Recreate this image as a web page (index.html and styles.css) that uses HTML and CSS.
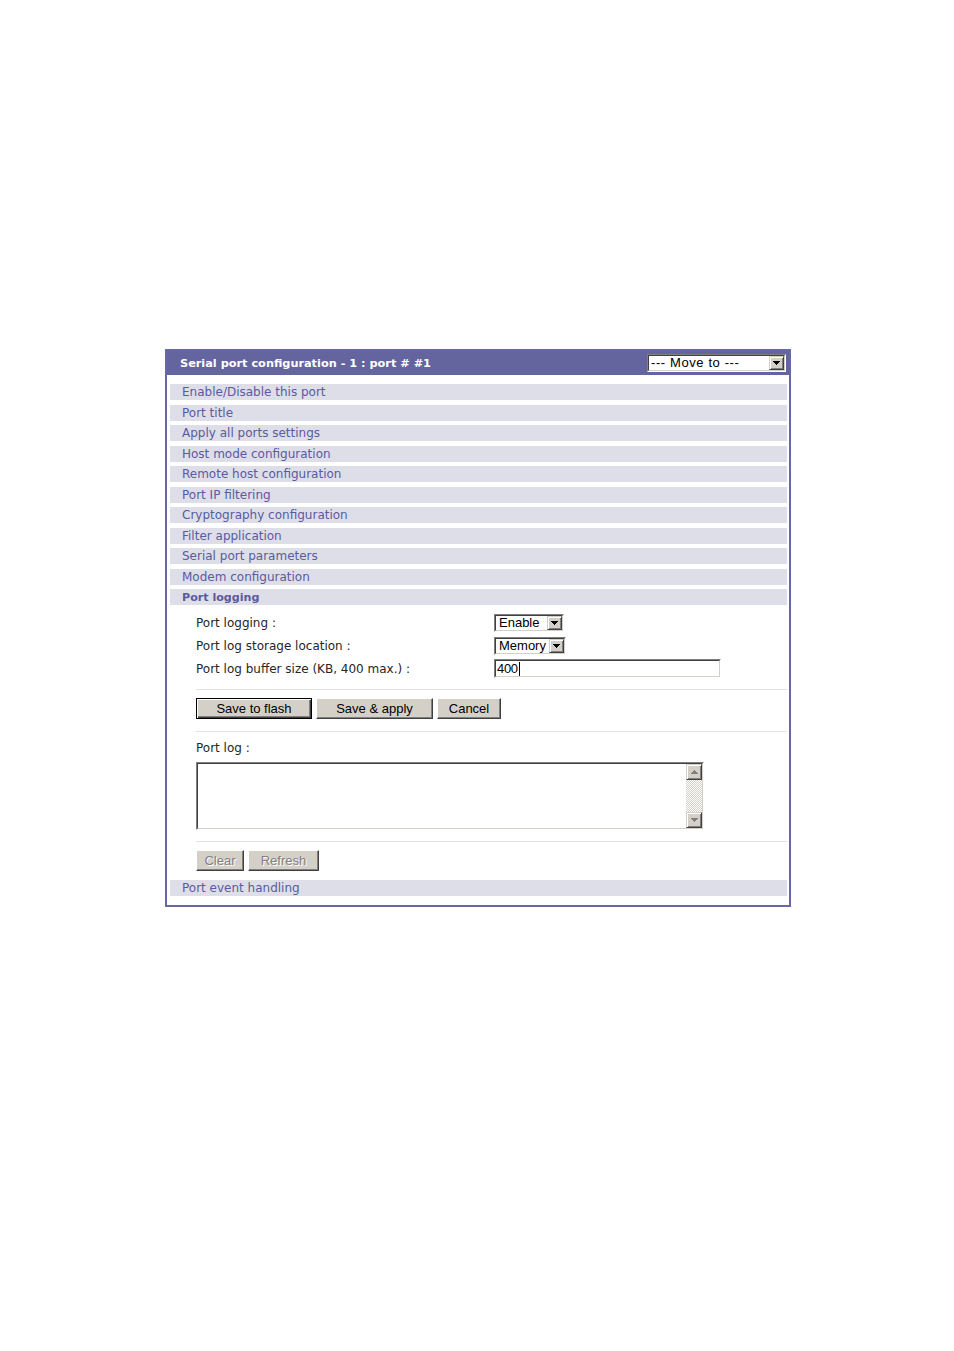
FILE: index.html
```html
<!DOCTYPE html>
<html>
<head>
<meta charset="utf-8">
<title>Serial port configuration</title>
<link rel="stylesheet" href="styles.css">
</head>
<body>
<div class="panel">
  <div class="panel-head">
    <span class="panel-title">Serial port configuration - 1 : port # #1</span>
    <div class="select select-move">
      <div class="select-inner">
        <span class="select-text move-text">--- Move to ---</span>
        <span class="select-btn"><svg width="7" height="4" viewBox="0 0 7 4" shape-rendering="crispEdges"><path d="M0 0h7v1h-1v1h-1v1h-1v1h-1v-1h-1v-1h-1v-1h-1z" fill="#000"/></svg></span>
      </div>
    </div>
  </div>
  <div class="panel-body">
    <div class="nav-row">Enable/Disable this port</div>
    <div class="nav-row">Port title</div>
    <div class="nav-row">Apply all ports settings</div>
    <div class="nav-row">Host mode configuration</div>
    <div class="nav-row">Remote host configuration</div>
    <div class="nav-row">Port IP filtering</div>
    <div class="nav-row">Cryptography configuration</div>
    <div class="nav-row">Filter application</div>
    <div class="nav-row">Serial port parameters</div>
    <div class="nav-row">Modem configuration</div>
    <div class="nav-row nav-row-active">Port logging</div>
    <div class="section">
      <div class="form-grid">
        <div class="form-label">Port logging :</div>
        <div class="form-value">
          <div class="select select-enable">
            <div class="select-inner">
              <span class="select-text">Enable</span>
              <span class="select-btn"><svg width="7" height="4" viewBox="0 0 7 4" shape-rendering="crispEdges"><path d="M0 0h7v1h-1v1h-1v1h-1v1h-1v-1h-1v-1h-1v-1h-1z" fill="#000"/></svg></span>
            </div>
          </div>
        </div>
        <div class="form-label">Port log storage location :</div>
        <div class="form-value">
          <div class="select select-memory">
            <div class="select-inner">
              <span class="select-text">Memory</span>
              <span class="select-btn"><svg width="7" height="4" viewBox="0 0 7 4" shape-rendering="crispEdges"><path d="M0 0h7v1h-1v1h-1v1h-1v1h-1v-1h-1v-1h-1v-1h-1z" fill="#000"/></svg></span>
            </div>
          </div>
        </div>
        <div class="form-label">Port log buffer size (KB, 400 max.) :</div>
        <div class="form-value">
          <div class="textinput">
            <div class="textinput-inner"><span class="input-text">400</span><span class="caret"></span></div>
          </div>
        </div>
      </div>
      <div class="sep"></div>
      <div class="btn-row">
        <button class="btn btn-default btn-flash">Save to flash</button>
        <button class="btn btn-apply">Save &amp; apply</button>
        <button class="btn btn-cancel">Cancel</button>
      </div>
      <div class="sep sep-after-btns"></div>
      <div class="log-label">Port log :</div>
      <div class="logbox">
        <div class="logbox-inner">
          <div class="log-area"></div>
          <div class="vscroll">
            <div class="sb-btn"><svg width="7" height="4" viewBox="0 0 7 4" shape-rendering="crispEdges"><path d="M3 0h1v1h1v1h1v1h1v1h-7v-1h1v-1h1v-1h1z" fill="#808080"/></svg></div>
            <div class="sb-track"></div>
            <div class="sb-btn"><svg width="7" height="4" viewBox="0 0 7 4" shape-rendering="crispEdges"><path d="M0 0h7v1h-1v1h-1v1h-1v1h-1v-1h-1v-1h-1v-1h-1z" fill="#808080"/></svg></div>
          </div>
        </div>
      </div>
      <div class="sep sep-log"></div>
      <div class="btn-row">
        <button class="btn btn-disabled btn-clear">Clear</button>
        <button class="btn btn-disabled btn-refresh">Refresh</button>
      </div>
    </div>
    <div class="nav-row">Port event handling</div>
  </div>
</div>
</body>
</html>
```

FILE: styles.css
```css
body {
  margin: 0;
  background: #ffffff;
  font-family: "DejaVu Sans", Verdana, sans-serif;
  font-size: 12px;
}

.panel {
  width: 626px;
  margin: 349px 0 0 165px;
  border: 2px solid #6868a4;
  box-sizing: border-box;
  background: #ffffff;
}

.panel-head {
  height: 24px;
  background: #64649e;
  display: flex;
  align-items: center;
  justify-content: space-between;
  padding: 0 3px 0 13px;
}

.panel-title {
  color: #ffffff;
  font-weight: bold;
  font-size: 11.3px;
  white-space: nowrap;
}

.panel-body {
  padding: 9px 2px 9px 3px;
}

.nav-row {
  height: 16px;
  line-height: 17px;
  background: #dedee8;
  color: #5a5aa0;
  padding-left: 12px;
  margin-top: 4.5px;
  white-space: nowrap;
}

.nav-row:first-child {
  margin-top: 0;
}

.nav-row-active {
  font-weight: bold;
  font-size: 11.1px;
}

.section {
  padding: 9px 0 4.5px 26px;
}

.form-grid {
  display: grid;
  grid-template-columns: 298px auto;
  row-gap: 4.5px;
  align-items: center;
}

.form-label {
  color: #262626;
  white-space: nowrap;
}

.form-value {
  display: flex;
}

/* classic sunken select */
.select {
  height: 18px;
  box-sizing: border-box;
  border: 1px solid;
  border-color: #808080 #ffffff #ffffff #808080;
  background: #ffffff;
}

.select-inner {
  height: 100%;
  box-sizing: border-box;
  border: 1px solid;
  border-color: #404040 #d4d0c8 #d4d0c8 #404040;
  display: flex;
  align-items: stretch;
}

.select-text {
  flex: 1;
  font-family: "Liberation Sans", Arial, sans-serif;
  font-size: 13px;
  line-height: 14px;
  padding-left: 3px;
  color: #000000;
  white-space: nowrap;
  overflow: hidden;
}

.move-text {
  letter-spacing: 0.6px;
  padding-left: 2px;
  line-height: 13px;
}

.select-btn {
  width: 15px;
  box-sizing: border-box;
  background: #d4d0c8;
  border: 1px solid;
  border-color: #d4d0c8 #404040 #404040 #d4d0c8;
  box-shadow: inset 1px 1px #ffffff, inset -1px -1px #808080;
  display: flex;
  align-items: center;
  justify-content: center;
}

.select-move {
  width: 139px;
}

.select-enable {
  width: 70px;
}

.select-memory {
  width: 72px;
}

/* text input */
.textinput {
  width: 227px;
  height: 19px;
  box-sizing: border-box;
  border: 1px solid;
  border-color: #808080 #ffffff #ffffff #808080;
  background: #ffffff;
}

.textinput-inner {
  height: 100%;
  box-sizing: border-box;
  border: 1px solid;
  border-color: #404040 #d4d0c8 #d4d0c8 #404040;
  display: flex;
  align-items: center;
  padding-left: 1px;
}

.input-text {
  font-family: "Liberation Sans", Arial, sans-serif;
  font-size: 13px;
  line-height: 15px;
  color: #000000;
  letter-spacing: -0.3px;
}

.caret {
  width: 1px;
  height: 14px;
  background: #000000;
  margin-left: 1px;
}

.sep {
  height: 1px;
  background: #e2e2e6;
  margin: 11px 0 8px;
}

.sep-after-btns {
  margin: 12px 0 0;
}

.sep-log {
  margin: 11px 0 8px;
}

.btn-row {
  display: flex;
  gap: 4px;
}

.btn {
  height: 21px;
  box-sizing: border-box;
  margin: 0;
  padding: 0;
  font-family: "Liberation Sans", Arial, sans-serif;
  font-size: 13px;
  color: #000000;
  background: #d4d0c8;
  border: 1px solid;
  border-color: #ffffff #404040 #404040 #ffffff;
  box-shadow: inset -1px -1px #808080;
  display: flex;
  align-items: center;
  justify-content: center;
}

.btn-default {
  border-color: #000000;
  box-shadow: inset 1px 1px #ffffff, inset -1px -1px #404040, inset -2px -2px #808080;
}

.btn-flash {
  width: 116px;
}

.btn-apply {
  width: 117px;
}

.btn-cancel {
  width: 64px;
}

.btn-disabled {
  color: #808080;
  text-shadow: 1px 1px #ffffff;
}

.btn-clear {
  width: 48px;
}

.btn-refresh {
  width: 71px;
}

.log-label {
  color: #262626;
  line-height: 14px;
  margin-top: 9px;
}

.logbox {
  width: 508px;
  height: 68px;
  margin-top: 7px;
  box-sizing: border-box;
  border: 1px solid;
  border-color: #808080 #ffffff #ffffff #808080;
}

.logbox-inner {
  height: 100%;
  box-sizing: border-box;
  border: 1px solid;
  border-color: #404040 #d4d0c8 #d4d0c8 #404040;
  display: flex;
}

.log-area {
  flex: 1;
  background: #ffffff;
}

.vscroll {
  width: 16px;
  display: flex;
  flex-direction: column;
}

.sb-btn {
  height: 16px;
  box-sizing: border-box;
  background: #d4d0c8;
  border: 1px solid;
  border-color: #d4d0c8 #404040 #404040 #d4d0c8;
  box-shadow: inset 1px 1px #ffffff, inset -1px -1px #808080;
  display: flex;
  align-items: center;
  justify-content: center;
}

.sb-track {
  flex: 1;
  background: repeating-conic-gradient(#d4d0c8 0 25%, #ffffff 0 50%) 0 0 / 2px 2px;
}
```
